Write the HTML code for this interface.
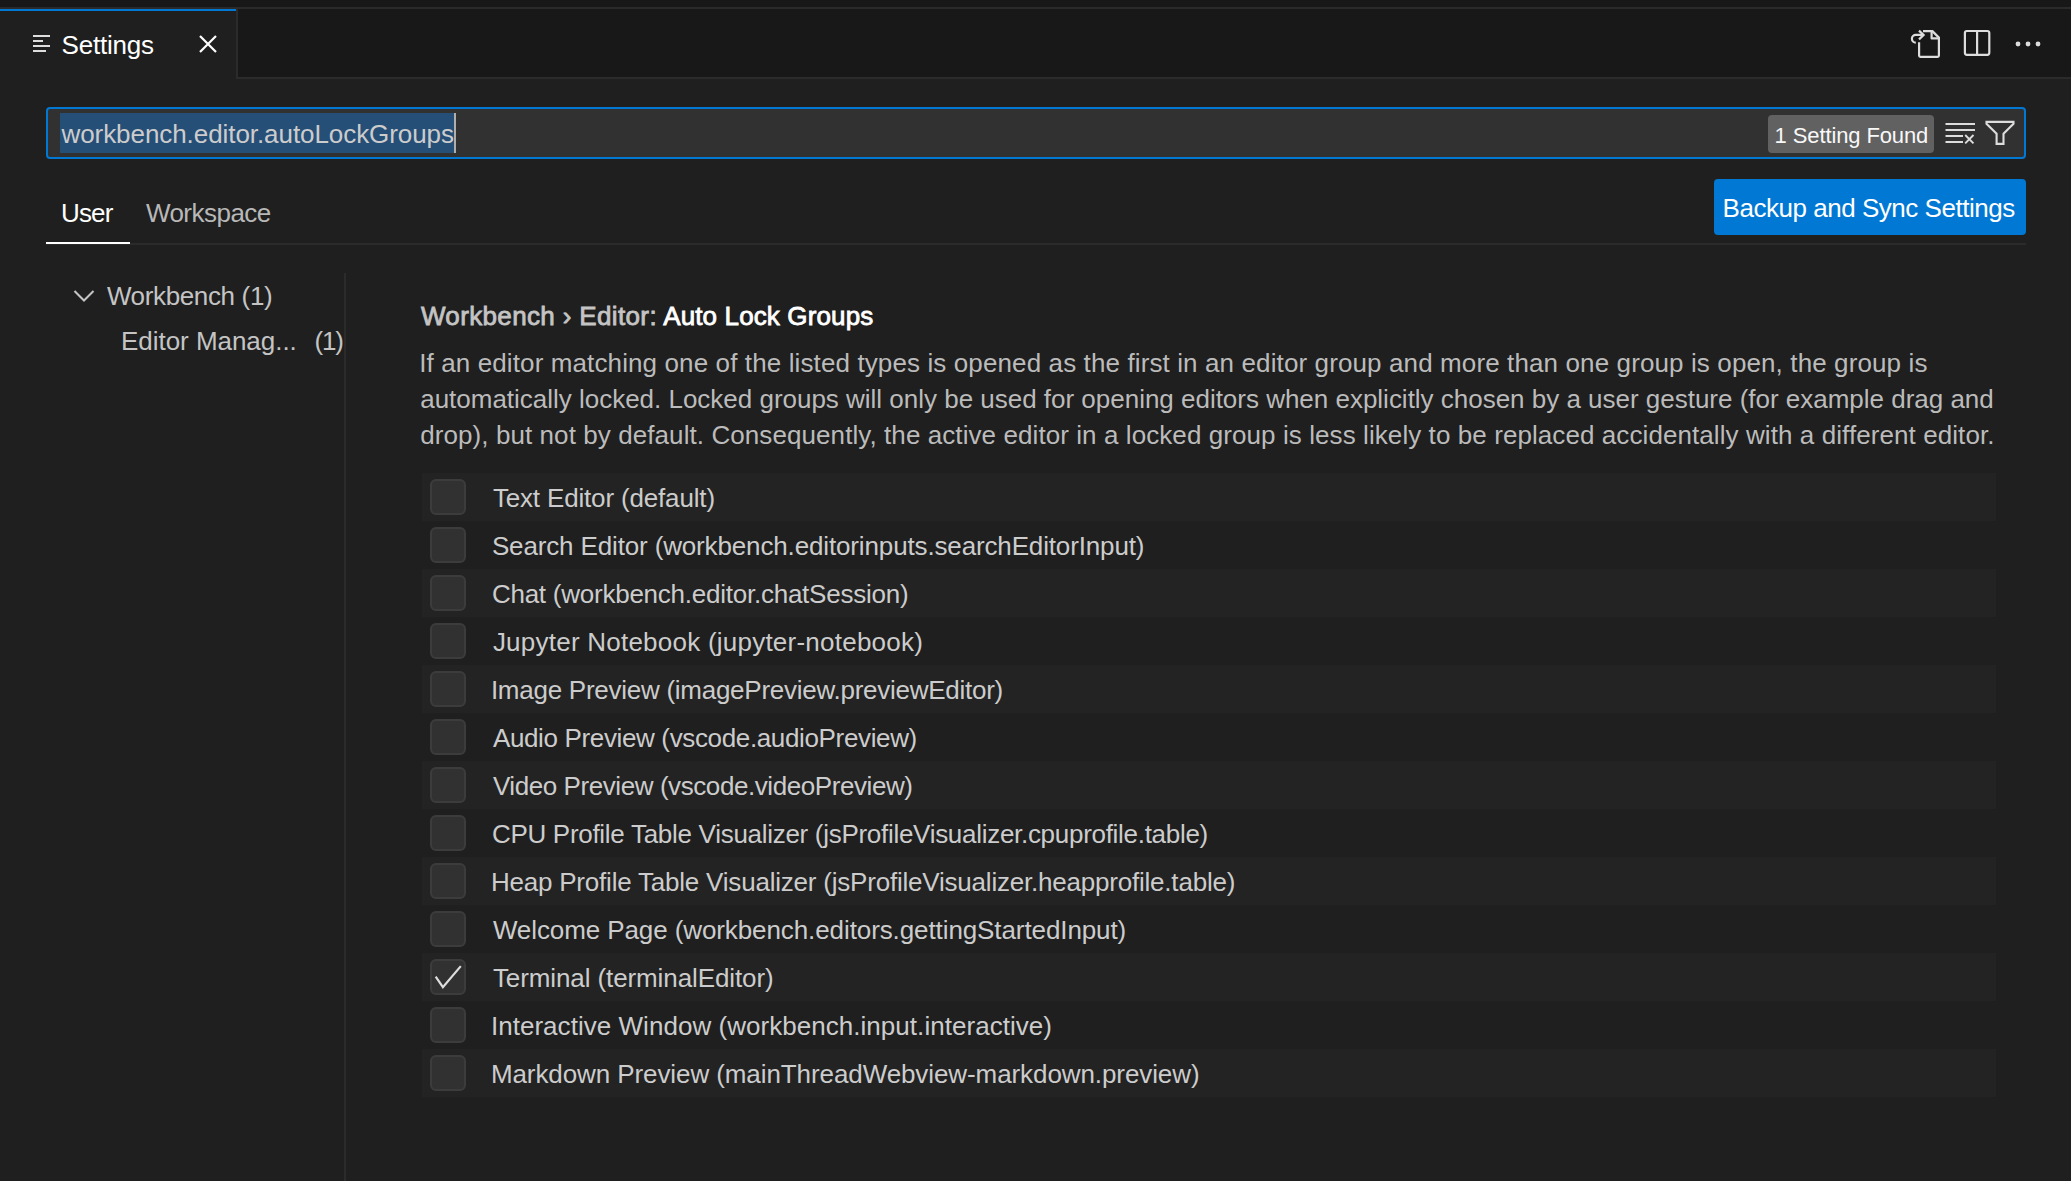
<!DOCTYPE html>
<html><head><meta charset="utf-8"><style>
html,body{margin:0;padding:0;}
body{width:2071px;height:1181px;background:#1f1f1f;position:relative;overflow:hidden;font-family:"Liberation Sans",sans-serif;}
.a{position:absolute;}
.t{position:absolute;white-space:nowrap;}
</style></head><body>

<style>
.cb{width:32px;height:32px;border:2px solid #3c3c3c;background:#313131;border-radius:6px;}
</style>
<div class="a" style="left:0;top:0;width:2071px;height:7px;background:#181818"></div>
<div class="a" style="left:0;top:7px;width:2071px;height:2px;background:#2b2b2b"></div>
<div class="a" style="left:0;top:9px;width:2071px;height:68px;background:#181818"></div>
<div class="a" style="left:0;top:77px;width:2071px;height:2px;background:#2b2b2b"></div>
<div class="a" style="left:0;top:9px;width:236px;height:70px;background:#1f1f1f"></div>
<div class="a" style="left:0;top:9px;width:236px;height:2px;background:#0078d4"></div>
<div class="a" style="left:236px;top:9px;width:2px;height:70px;background:#2b2b2b"></div>
<!-- tab icon -->
<svg class="a" style="left:33px;top:35px" width="17" height="17" viewBox="0 0 17 17" fill="#dddddd">
<rect x="0" y="0" width="17" height="2"/><rect x="0" y="5" width="10" height="2"/><rect x="0" y="10" width="17" height="2"/><rect x="0" y="15" width="13" height="2"/></svg>
<!-- close x -->
<svg class="a" style="left:197px;top:33px" width="22" height="22" viewBox="0 0 22 22"><path d="M3 3 L19 19 M19 3 L3 19" stroke="#ffffff" stroke-width="2.2" fill="none"/></svg>
<!-- toolbar icons -->
<svg class="a" style="left:1905px;top:26px" width="40" height="36" viewBox="0 0 40 36" fill="none" stroke="#dddddd" stroke-width="2.2" stroke-linejoin="round">
<path d="M14.1 16.2 V29.5 Q14.1 30.8 15.4 30.8 H32.6 Q33.9 30.8 33.9 29.5 V11.6 L27.4 5.1 H18"/><path d="M26.6 5.1 V12.4 H33.9"/>
<path d="M10.8 16.7 A3.9 3.9 0 0 1 10.8 8.9 H18.6" stroke-linejoin="miter"/><path d="M14 4.6 L18.6 9 L14 13.4" stroke-linejoin="miter"/></svg>
<svg class="a" style="left:1962px;top:28px" width="30" height="30" viewBox="0 0 30 30" fill="none" stroke="#dddddd" stroke-width="2.2">
<rect x="2.9" y="3" width="24.4" height="23.8" rx="2"/><path d="M15.1 3 V26.8"/></svg>
<svg class="a" style="left:2010px;top:36px" width="36" height="16" viewBox="0 0 36 16" fill="#dddddd">
<circle cx="8" cy="8" r="2.4"/><circle cx="18" cy="8" r="2.4"/><circle cx="28" cy="8" r="2.4"/></svg>
<!-- search box -->
<div class="a" style="left:46px;top:107px;width:1976px;height:48px;border:2px solid #0078d4;border-radius:4px;background:#313131"></div>
<div class="a" style="left:60px;top:113px;width:394px;height:40px;background:#264f78"></div>
<div class="a" style="left:454px;top:113px;width:2px;height:40px;background:#aeafad"></div>
<div class="a" style="left:1768px;top:115px;width:166px;height:38px;background:#616161;border-radius:4px"></div>
<!-- clear icon -->
<svg class="a" style="left:1944px;top:120px" width="34" height="26" viewBox="0 0 34 26" fill="#dddddd">
<rect x="1.5" y="3" width="29.5" height="2"/><rect x="1.5" y="9" width="29.5" height="2"/><rect x="1.5" y="15" width="17.5" height="2"/><rect x="1.5" y="21" width="17.5" height="2"/>
<path d="M21.2 15 L29.5 23.3 M29.5 15 L21.2 23.3" stroke="#dddddd" stroke-width="1.9" fill="none"/></svg>
<!-- filter icon -->
<svg class="a" style="left:1984px;top:119px" width="32" height="28" viewBox="0 0 32 28" fill="none" stroke="#dddddd" stroke-width="2.1">
<path d="M2.5 2.9 H29.5 V4.8 L19.5 14.8 V24.9 H12.6 V14.8 L2.5 4.8 Z" stroke-linejoin="miter" stroke-miterlimit="2"/></svg>
<!-- settings tabs -->
<div class="a" style="left:46px;top:243px;width:1980px;height:2px;background:#2b2b2b"></div>
<div class="a" style="left:46px;top:242px;width:84px;height:2px;background:#ffffff"></div>
<!-- button -->
<div class="a" style="left:1714px;top:179px;width:312px;height:56px;background:#0078d4;border-radius:4px"></div>
<!-- tree -->
<svg class="a" style="left:72px;top:287px" width="24" height="18" viewBox="0 0 24 18" fill="none" stroke="#c4c4c4" stroke-width="2.1">
<path d="M2.5 4 L12 13.5 L21.5 4"/></svg>
<div class="a" style="left:344px;top:273px;width:2px;height:908px;background:#2b2b2b"></div>
<div class="a" style="left:422px;top:473px;width:1574px;height:48px;background:#232323"></div>
<div class="a cb" style="left:430px;top:479px;"></div>
<div class="a cb" style="left:430px;top:527px;"></div>
<div class="a" style="left:422px;top:569px;width:1574px;height:48px;background:#232323"></div>
<div class="a cb" style="left:430px;top:575px;"></div>
<div class="a cb" style="left:430px;top:623px;"></div>
<div class="a" style="left:422px;top:665px;width:1574px;height:48px;background:#232323"></div>
<div class="a cb" style="left:430px;top:671px;"></div>
<div class="a cb" style="left:430px;top:719px;"></div>
<div class="a" style="left:422px;top:761px;width:1574px;height:48px;background:#232323"></div>
<div class="a cb" style="left:430px;top:767px;"></div>
<div class="a cb" style="left:430px;top:815px;"></div>
<div class="a" style="left:422px;top:857px;width:1574px;height:48px;background:#232323"></div>
<div class="a cb" style="left:430px;top:863px;"></div>
<div class="a cb" style="left:430px;top:911px;"></div>
<div class="a" style="left:422px;top:953px;width:1574px;height:48px;background:#232323"></div>
<div class="a cb" style="left:430px;top:959px;"></div>
<div class="a cb" style="left:430px;top:1007px;"></div>
<div class="a" style="left:422px;top:1049px;width:1574px;height:48px;background:#232323"></div>
<div class="a cb" style="left:430px;top:1055px;"></div>
<svg class="a" style="left:430px;top:959px" width="36" height="36" viewBox="0 0 36 36"><path d="M5.7 17.7 L12.9 28.1 L30.8 7.1" fill="none" stroke="#dddddd" stroke-width="2.2"/></svg>

<div class="t" style="left:61.50px;top:32.00px;font-size:26px;line-height:26px;font-weight:400;color:#ffffff;letter-spacing:-0.206px;">Settings</div>
<div class="t" style="left:61.50px;top:121.30px;font-size:26px;line-height:26px;font-weight:400;color:#cccccc;letter-spacing:-0.069px;">workbench.editor.autoLockGroups</div>
<div class="t" style="left:1774.60px;top:124.70px;font-size:22px;line-height:22px;font-weight:400;color:#f8f8f8;letter-spacing:-0.114px;">1 Setting Found</div>
<div class="t" style="left:61.00px;top:199.50px;font-size:26px;line-height:26px;font-weight:400;color:#ffffff;letter-spacing:-0.845px;">User</div>
<div class="t" style="left:145.90px;top:199.50px;font-size:26px;line-height:26px;font-weight:400;color:#b8b8b8;letter-spacing:-0.526px;">Workspace</div>
<div class="t" style="left:1722.60px;top:195.30px;font-size:26px;line-height:26px;font-weight:400;color:#ffffff;letter-spacing:-0.475px;">Backup and Sync Settings</div>
<div class="t" style="left:106.90px;top:283.20px;font-size:26px;line-height:26px;font-weight:400;color:#c4c4c4;letter-spacing:-0.356px;">Workbench (1)</div>
<div class="t" style="left:121.00px;top:327.50px;font-size:26px;line-height:26px;font-weight:400;color:#c4c4c4;letter-spacing:-0.035px;">Editor Manag...</div>
<div class="t" style="left:314.50px;top:327.50px;font-size:26px;line-height:26px;font-weight:400;color:#c4c4c4;letter-spacing:-1.159px;">(1)</div>
<div class="t" style="left:420.90px;top:303.30px;font-size:26px;line-height:26px;font-weight:400;color:#c4c4c4;letter-spacing:0.358px;-webkit-text-stroke:0.8px #c4c4c4">Workbench › Editor:</div>
<div class="t" style="left:663.20px;top:303.30px;font-size:26px;line-height:26px;font-weight:400;color:#ffffff;letter-spacing:0.132px;-webkit-text-stroke:0.8px #ffffff">Auto Lock Groups</div>
<div class="t" style="left:419.20px;top:350.20px;font-size:26px;line-height:26px;font-weight:400;color:#bbbbbb;letter-spacing:0.115px;">If an editor matching one of the listed types is opened as the first in an editor group and more than one group is open, the group is</div>
<div class="t" style="left:420.20px;top:385.90px;font-size:26px;line-height:26px;font-weight:400;color:#bbbbbb;letter-spacing:-0.013px;">automatically locked. Locked groups will only be used for opening editors when explicitly chosen by a user gesture (for example drag and</div>
<div class="t" style="left:420.20px;top:422.30px;font-size:26px;line-height:26px;font-weight:400;color:#bbbbbb;letter-spacing:0.080px;">drop), but not by default. Consequently, the active editor in a locked group is less likely to be replaced accidentally with a different editor.</div>
<div class="t" style="left:492.90px;top:485.00px;font-size:26px;line-height:26px;font-weight:400;color:#cccccc;letter-spacing:-0.164px;">Text Editor (default)</div>
<div class="t" style="left:491.90px;top:533.00px;font-size:26px;line-height:26px;font-weight:400;color:#cccccc;letter-spacing:-0.143px;">Search Editor (workbench.editorinputs.searchEditorInput)</div>
<div class="t" style="left:491.90px;top:581.00px;font-size:26px;line-height:26px;font-weight:400;color:#cccccc;letter-spacing:-0.242px;">Chat (workbench.editor.chatSession)</div>
<div class="t" style="left:492.90px;top:629.00px;font-size:26px;line-height:26px;font-weight:400;color:#cccccc;letter-spacing:0.234px;">Jupyter Notebook (jupyter-notebook)</div>
<div class="t" style="left:490.90px;top:677.00px;font-size:26px;line-height:26px;font-weight:400;color:#cccccc;letter-spacing:-0.262px;">Image Preview (imagePreview.previewEditor)</div>
<div class="t" style="left:492.90px;top:725.00px;font-size:26px;line-height:26px;font-weight:400;color:#cccccc;letter-spacing:-0.355px;">Audio Preview (vscode.audioPreview)</div>
<div class="t" style="left:492.90px;top:773.00px;font-size:26px;line-height:26px;font-weight:400;color:#cccccc;letter-spacing:-0.425px;">Video Preview (vscode.videoPreview)</div>
<div class="t" style="left:491.90px;top:821.00px;font-size:26px;line-height:26px;font-weight:400;color:#cccccc;letter-spacing:-0.291px;">CPU Profile Table Visualizer (jsProfileVisualizer.cpuprofile.table)</div>
<div class="t" style="left:490.90px;top:869.00px;font-size:26px;line-height:26px;font-weight:400;color:#cccccc;letter-spacing:-0.210px;">Heap Profile Table Visualizer (jsProfileVisualizer.heapprofile.table)</div>
<div class="t" style="left:492.90px;top:917.00px;font-size:26px;line-height:26px;font-weight:400;color:#cccccc;letter-spacing:-0.097px;">Welcome Page (workbench.editors.gettingStartedInput)</div>
<div class="t" style="left:492.90px;top:965.00px;font-size:26px;line-height:26px;font-weight:400;color:#cccccc;letter-spacing:-0.101px;">Terminal (terminalEditor)</div>
<div class="t" style="left:490.90px;top:1013.00px;font-size:26px;line-height:26px;font-weight:400;color:#cccccc;letter-spacing:0.039px;">Interactive Window (workbench.input.interactive)</div>
<div class="t" style="left:490.90px;top:1061.00px;font-size:26px;line-height:26px;font-weight:400;color:#cccccc;letter-spacing:-0.089px;">Markdown Preview (mainThreadWebview-markdown.preview)</div>
</body></html>
